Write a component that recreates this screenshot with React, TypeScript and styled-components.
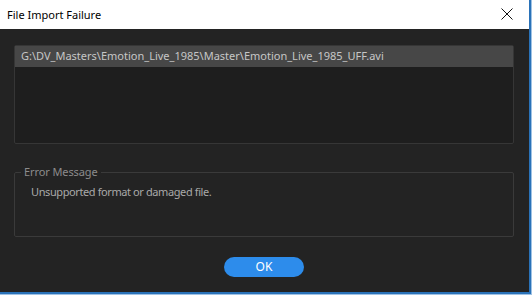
import React from 'react';
import styled, { createGlobalStyle } from 'styled-components';

const GlobalStyle = createGlobalStyle`
    html, body {
        margin: 0;
        padding: 0;
        background: #232323;
    }
    * {
        box-sizing: border-box;
    }
`;

const Frame = styled.div`
    width: 532px;
    height: 295px;
    border-right: 1px solid #9fc2e4;
    border-bottom: 1px solid #9fc2e4;
    font-family: "Noto Sans", "Open Sans", sans-serif;
    font-size: 11px;
`;

const Window = styled.div`
    height: 100%;
    display: flex;
    flex-direction: column;
    border-right: 2px solid #2a72b8;
    border-bottom: 2px solid #2a72b8;
`;

const TitleBar = styled.div`
    height: 29px;
    flex: none;
    display: flex;
    align-items: center;
    justify-content: space-between;
    padding: 0 16px 1px 7px;
    background: #ffffff;
    color: #000000;
`;

const CloseButton = styled.button`
    border: 0;
    background: none;
    padding: 0;
    width: 12px;
    height: 12px;
    display: flex;
`;

const Body = styled.div`
    flex: 1;
    display: flex;
    flex-direction: column;
    background: #232323;
    padding: 16px 15px 0 14px;
`;

const FileList = styled.div`
    height: 99px;
    border: 1px solid #363636;
    border-radius: 2px;
    background: #1e1e1e;
`;

const FileRow = styled.div<{ $selected?: boolean }>`
    height: 21px;
    line-height: 20px;
    padding-left: 6px;
    background: ${p => (p.$selected ? '#474747' : 'transparent')};
    color: #c6c6c6;
    white-space: nowrap;
`;

const MessageBox = styled.fieldset`
    margin: 21px 0 0 0;
    height: 72px;
    padding: 0 0 0 16px;
    border: 1px solid #3a3a3a;
    border-radius: 2px;
    min-width: 0;
`;

const MessageLegend = styled.legend`
    margin-left: -10px;
    padding: 0 3px;
    color: #8c8c8c;
    line-height: 14px;
    letter-spacing: -0.1px;
`;

const MessageText = styled.p`
    margin: 5px 0 0 0;
    color: #a9a9a9;
    letter-spacing: -0.4px;
`;

const Footer = styled.div`
    display: flex;
    justify-content: center;
    padding-top: 20px;
`;

const OkButton = styled.button`
    width: 80px;
    height: 20px;
    border: 0;
    border-radius: 10px;
    background: #2d8ceb;
    color: #ffffff;
    font-family: "Noto Sans", "Open Sans", sans-serif;
    font-size: 12px;
    padding: 0;
    line-height: 20px;
`;

const App = () => {
    const files = ['G:\\DV_Masters\\Emotion_Live_1985\\Master\\Emotion_Live_1985_UFF.avi'];

    return (
        <>
            <GlobalStyle />
            <Frame>
                <Window>
                    <TitleBar>
                        <span>File Import Failure</span>
                        <CloseButton aria-label="Close">
                            <svg width="12" height="12" viewBox="0 0 12 12">
                                <path d="M0.5 0.5 L11.5 11.5 M11.5 0.5 L0.5 11.5" stroke="#111" strokeWidth="1" fill="none" />
                            </svg>
                        </CloseButton>
                    </TitleBar>
                    <Body>
                        <FileList>
                            {files.map((f, i) => (
                                <FileRow key={i} $selected={i === 0}>{f}</FileRow>
                            ))}
                        </FileList>
                        <MessageBox>
                            <MessageLegend>Error Message</MessageLegend>
                            <MessageText>Unsupported format or damaged file.</MessageText>
                        </MessageBox>
                        <Footer>
                            <OkButton>OK</OkButton>
                        </Footer>
                    </Body>
                </Window>
            </Frame>
        </>
    );
};

export default App;
